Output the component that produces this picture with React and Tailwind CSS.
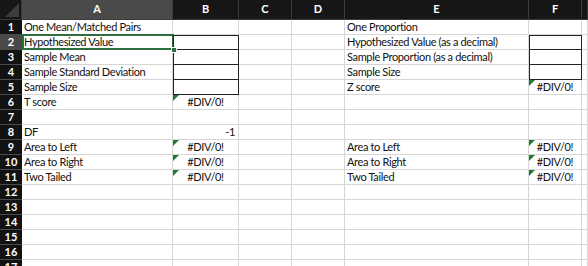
import React from 'react';

const cols = ['A', 'B', 'C', 'D', 'E', 'F', ''];

// one entry per sheet row, only cells that hold something
const rows = [
  { a: 'One Mean/Matched Pairs', e: 'One Proportion' },
  { a: 'Hypothesized Value', e: 'Hypothesized Value (as a decimal)', boxB: 'top', boxF: 'top' },
  { a: 'Sample Mean', e: 'Sample Proportion (as a decimal)', boxB: 'mid', boxF: 'bottom' },
  { a: 'Sample Standard Deviation', e: 'Sample Size', boxB: 'mid', boxF: 'end' },
  { a: 'Sample Size', e: 'Z score', boxB: 'end', f: '#DIV/0!', errF: true },
  { a: 'T score', b: '#DIV/0!', errB: true },
  {},
  { a: 'DF', b: '-1', bRight: true },
  { a: 'Area to Left', b: '#DIV/0!', errB: true, e: 'Area to Left', f: '#DIV/0!', errF: true },
  { a: 'Area to Right', b: '#DIV/0!', errB: true, e: 'Area to Right', f: '#DIV/0!', errF: true },
  { a: 'Two Tailed', b: '#DIV/0!', errB: true, e: 'Two Tailed', f: '#DIV/0!', errF: true },
  {},
  {},
  {},
  {},
  {},
  {},
];

const Tri = () => (
  <svg className="absolute left-0 top-0" width="6" height="6" viewBox="0 0 6 6">
    <polygon points="0,0 6,0 0,6" fill="#1f7a36" />
  </svg>
);

const Cell = ({ children, err, right, center, box }) => {
  const boxCls =
    box === 'top'
      ? 'border-t border-l border-r-[#222] border-t-[#222] border-l-[#222] border-b-[#222]'
      : box
      ? 'border-l border-l-[#222] border-r-[#222] border-b-[#222]'
      : 'border-r-[#d6d6d6] border-b-[#d6d6d6]';
  return (
    <div
      className={`relative h-[15px] border-r border-b ${boxCls} flex items-center overflow-visible whitespace-nowrap ${
        right ? 'justify-end pr-[3px]' : center ? 'justify-center' : 'pl-[2px]'
      }`}
    >
      {err && <Tri />}
      {children}
    </div>
  );
};

export default function App() {
  return (
    <div
      className="w-[588px] h-[266px] overflow-hidden bg-white text-[11px] tracking-[-0.35px] text-[#111]"
      style={{ fontFamily: 'Lato, "Open Sans", sans-serif' }}
    >
      <div className="grid grid-cols-[22px_151px_66px_53px_53px_184px_53px_1fr]">
        {/* header */}
        <div className="relative h-[20px] bg-[#161616] border-r border-b border-[#3a3a3a]">
          <svg className="absolute right-[2px] bottom-[2px]" width="14" height="14" viewBox="0 0 14 14">
            <polygon points="14,0 14,14 0,14" fill="#3c3c3c" />
          </svg>
        </div>
        {cols.map((c, i) => (
          <div
            key={i}
            className={`h-[20px] flex items-center justify-center font-bold text-white text-[11px] tracking-normal border-r border-b border-[#3a3a3a] ${
              c === 'A' ? 'bg-[#4a4a4a]' : 'bg-[#161616]'
            }`}
          >
            {c}
          </div>
        ))}

        {rows.map((r, i) => (
          <React.Fragment key={i}>
            <div
              className={`h-[15px] flex items-center justify-center font-bold text-white text-[11px] tracking-normal border-b border-[#4a4a4a] ${
                i === 1 ? 'bg-[#4a4a4a]' : 'bg-[#121212]'
              }`}
            >
              {i + 1}
            </div>
            <div className="relative">
              <Cell>{r.a}</Cell>
              {i === 1 && (
                <>
                  <div className="absolute left-0 top-[-1px] right-[-1px] bottom-0 border-2 border-[#2c6e3f] pointer-events-none" />
                  <div className="absolute right-[-4px] bottom-[-3px] w-[6px] h-[6px] bg-[#2c6e3f] border border-white z-10" />
                </>
              )}
            </div>
            <Cell err={r.errB} right={r.bRight} center={!r.bRight} box={r.boxB}>
              {r.b}
            </Cell>
            <Cell />
            <Cell />
            <Cell>{r.e}</Cell>
            <Cell err={r.errF} center box={r.boxF}>
              {r.f}
            </Cell>
            <Cell />
          </React.Fragment>
        ))}
      </div>
    </div>
  );
}
